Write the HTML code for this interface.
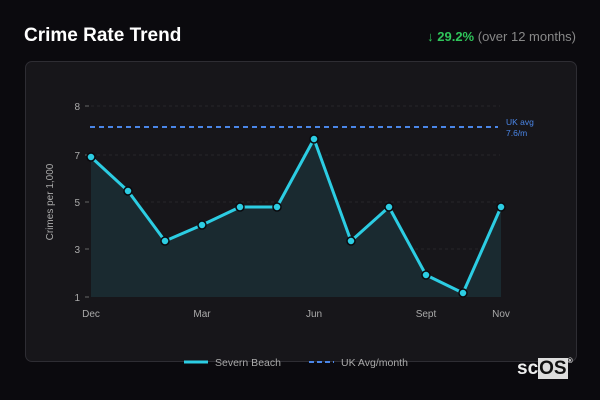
<!DOCTYPE html><html><head><style>
body{margin:0;width:600px;height:400px;background:#0b0a0e;font-family:"Liberation Sans",sans-serif;position:relative;overflow:hidden}
.t{position:absolute;left:24px;top:25px;color:#fff;font-weight:bold;font-size:19px}
.r{position:absolute;right:24px;top:29px;font-size:13px;color:#888}
.r b{color:#2fc45a}
.card{position:absolute;left:25px;top:61px;width:550px;height:299px;background:#17161a;border:1px solid #2e2d33;border-radius:7px}
svg{position:absolute;left:0;top:0}
.logo{position:absolute;left:517px;top:358px;font-weight:bold;font-size:19px;color:#eee}
.logo span{background:#ddd;color:#111;padding:0 1px}
</style></head><body>
<div class="t">Crime Rate Trend</div>
<div class="r"><b>↓ 29.2%</b> (over 12 months)</div>
<div class="card"></div>
<svg width="600" height="400" font-family="Liberation Sans,sans-serif">
<g stroke="#27262b" stroke-dasharray="3 3" stroke-width="1"><line x1="91" x2="500" y1="106" y2="106"/><line x1="91" x2="500" y1="155" y2="155"/><line x1="91" x2="500" y1="202" y2="202"/><line x1="91" x2="500" y1="249" y2="249"/></g>
<g stroke="#666"><line x1="85" x2="89" y1="106" y2="106"/><line x1="85" x2="89" y1="155" y2="155"/><line x1="85" x2="89" y1="202" y2="202"/><line x1="85" x2="89" y1="249" y2="249"/><line x1="85" x2="89" y1="297" y2="297"/></g>
<g fill="#aaa" font-size="10" text-anchor="end"><text x="80" y="110">8</text><text x="80" y="159">7</text><text x="80" y="206">5</text><text x="80" y="253">3</text><text x="80" y="301">1</text></g>
<text transform="translate(53,202) rotate(-90)" fill="#aaa" font-size="10" text-anchor="middle">Crimes per 1,000</text>
<polygon fill="#1a2a30" points="91,157 128,191 165,241 202,225 240,207 277,207 314,139 351,241 389,207 426,275 463,293 501,207 501,297 91,297"/>
<polyline fill="none" stroke="#2ccde3" stroke-width="3" stroke-linejoin="round" points="91,157 128,191 165,241 202,225 240,207 277,207 314,139 351,241 389,207 426,275 463,293 501,207"/>
<g fill="#2ccde3" stroke="#0b0a0e" stroke-width="1.5"><circle cx="91" cy="157" r="4"/><circle cx="128" cy="191" r="4"/><circle cx="165" cy="241" r="4"/><circle cx="202" cy="225" r="4"/><circle cx="240" cy="207" r="4"/><circle cx="277" cy="207" r="4"/><circle cx="314" cy="139" r="4"/><circle cx="351" cy="241" r="4"/><circle cx="389" cy="207" r="4"/><circle cx="426" cy="275" r="4"/><circle cx="463" cy="293" r="4"/><circle cx="501" cy="207" r="4"/></g>
<line x1="90" x2="498" y1="127" y2="127" stroke="#4a86e8" stroke-width="2" stroke-dasharray="5 4"/>
<text x="506" y="125" fill="#4a86e8" font-size="8.5">UK avg</text><text x="506" y="136" fill="#4a86e8" font-size="8.5">7.6/m</text>
<g fill="#aaa" font-size="10" text-anchor="middle"><text x="91" y="317">Dec</text><text x="202" y="317">Mar</text><text x="314" y="317">Jun</text><text x="426" y="317">Sept</text><text x="501" y="317">Nov</text></g>
<line x1="184" x2="208" y1="362" y2="362" stroke="#2ccde3" stroke-width="3"/>
<text x="215" y="366" fill="#aaa" font-size="10.5">Severn Beach</text>
<line x1="309" x2="334" y1="362" y2="362" stroke="#4a86e8" stroke-width="2" stroke-dasharray="5 3"/>
<text x="341" y="366" fill="#aaa" font-size="10.5">UK Avg/month</text>
</svg>
<div class="logo">sc<span>OS</span><sup style="font-size:7px;vertical-align:top">®</sup></div>
</body></html>
